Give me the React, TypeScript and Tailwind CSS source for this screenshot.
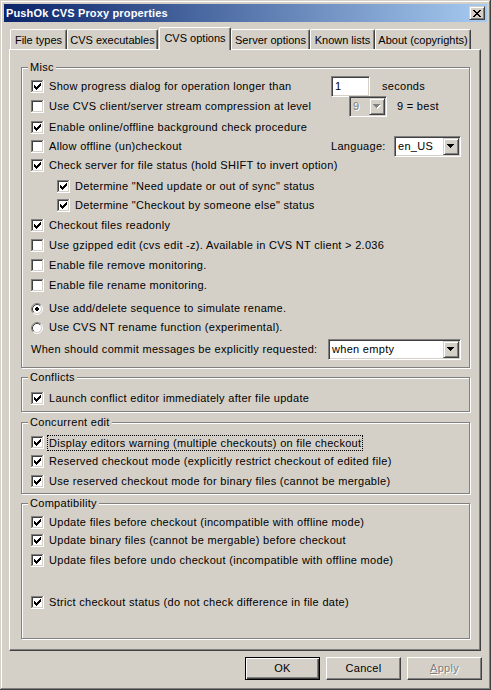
import React from "react";

// 1px bitmaps for the classic widget glyphs
const CHECK = ["......x", ".....xx", "x...xxx", "xx.xxx.", "xxxxx..", ".xxx...", "..x...."];
const CROSS = ["xx....xx", ".xx..xx.", "..xxxx..", "...xx...", "..xxxx..", ".xx..xx.", "xx....xx"];
const ARROW = ["xxxxxxx", ".xxxxx.", "..xxx..", "...x..."];
const DOT = [".xx.", "xxxx", "xxxx", ".xx."];

const sunken =
  "border border-t-[#808080] border-l-[#808080] border-b-white border-r-white shadow-[inset_1px_1px_0_#404040,inset_-1px_-1px_0_#d4d0c8]";
const raisedSmall =
  "border border-t-[#d4d0c8] border-l-[#d4d0c8] border-b-[#404040] border-r-[#404040] shadow-[inset_1px_1px_0_#fff,inset_-1px_-1px_0_#808080] bg-[#d4d0c8]";
const disabledText = "text-[#808080] [text-shadow:1px_1px_0_#fff]";

interface PixProps {
  rows: string[];
  color: string;
  dx?: number;
  dy?: number;
}

const Pix: React.FC<PixProps> = ({ rows, color, dx = 0, dy = 0 }) => (
  <>
    {rows.flatMap((r, y) =>
      r.split("").map((c, x) =>
        c === "x" ? (
          <rect key={`${x}-${y}`} x={x + dx} y={y + dy} width={1} height={1} fill={color} />
        ) : null
      )
    )}
  </>
);

const CheckBox: React.FC<{ checked?: boolean }> = ({ checked = true }) => (
  <svg width="13" height="13" className="shrink-0" shapeRendering="crispEdges">
    <rect width="13" height="13" fill="#fff" />
    <rect width="12" height="12" fill="#808080" />
    <rect x="1" y="1" width="11" height="11" fill="#d4d0c8" />
    <rect x="1" y="1" width="10" height="10" fill="#404040" />
    <rect x="2" y="2" width="9" height="9" fill="#fff" />
    {checked && <Pix rows={CHECK} color="#000" dx={3} dy={3} />}
  </svg>
);

const Radio: React.FC<{ on?: boolean }> = ({ on }) => (
  <svg width="12" height="12" viewBox="0 0 12 12" className="shrink-0">
    <circle cx="6" cy="6" r="4.5" fill="#fff" />
    <path d="M2.11 9.89 A5.5 5.5 0 0 1 9.89 2.11" fill="none" stroke="#808080" />
    <path d="M9.89 2.11 A5.5 5.5 0 0 1 2.11 9.89" fill="none" stroke="#fff" />
    <path d="M2.82 9.18 A4.5 4.5 0 0 1 9.18 2.82" fill="none" stroke="#404040" />
    <path d="M9.18 2.82 A4.5 4.5 0 0 1 2.82 9.18" fill="none" stroke="#d4d0c8" />
    {on && (
      <g shapeRendering="crispEdges">
        <Pix rows={DOT} color="#000" dx={4} dy={4} />
      </g>
    )}
  </svg>
);

const Combo: React.FC<{ value: string; width: string; disabled?: boolean }> = ({ value, width, disabled }) => (
  <div className={`flex h-[21px] shrink-0 p-[1px] ${width} ${sunken} ${disabled ? "bg-[#d4d0c8]" : "bg-white"}`}>
    <span className={`flex-1 pl-[2px] leading-[17px] ${disabled ? disabledText : ""}`}>{value}</span>
    <div className={`flex h-[17px] w-[16px] items-center justify-center ${raisedSmall}`}>
      <svg width="8" height="5" shapeRendering="crispEdges">
        {disabled ? (
          <>
            <Pix rows={ARROW} color="#fff" dx={1} dy={1} />
            <Pix rows={ARROW} color="#808080" />
          </>
        ) : (
          <Pix rows={ARROW} color="#000" />
        )}
      </svg>
    </div>
  </div>
);

const Check: React.FC<{ label: string; checked?: boolean; mt?: string; indent?: boolean; focus?: boolean }> = ({
  label,
  checked = true,
  mt = "",
  indent,
  focus,
}) => (
  <div className={`flex h-[13px] items-center ${mt} ${indent ? "pl-[26px]" : ""}`}>
    <CheckBox checked={checked} />
    {focus ? (
      <span className="ml-[4px] whitespace-nowrap px-[1px] leading-[14px] outline-1 outline-dotted outline-black">
        {label}
      </span>
    ) : (
      <span className="ml-[5px] whitespace-nowrap">{label}</span>
    )}
  </div>
);

const Group: React.FC<{ title: string; className: string; children: React.ReactNode }> = ({
  title,
  className,
  children,
}) => (
  <div
    className={`relative border border-[#808080] pl-[9px] shadow-[inset_1px_1px_0_#fff,1px_1px_0_#fff] ${className}`}
  >
    <span className="absolute left-[6px] top-[-7px] bg-[#d4d0c8] px-[2px] leading-[13px]">{title}</span>
    {children}
  </div>
);

const tabs = [
  { label: "File types", w: "w-[57px]" },
  { label: "CVS executables", w: "w-[91px] mr-[1px]" },
  { label: "CVS options", w: "w-[72px]", active: true },
  { label: "Server options", w: "w-[79px]" },
  { label: "Known lists", w: "w-[65px]" },
  { label: "About (copyrights)", w: "w-[96px]" },
];

const Button: React.FC<{ label: React.ReactNode; primary?: boolean; disabled?: boolean }> = ({
  label,
  primary,
  disabled,
}) => (
  <div
    className={`flex h-[23px] w-[75px] items-center justify-center bg-[#d4d0c8] ${
      primary
        ? "border border-black shadow-[inset_1px_1px_0_#fff,inset_-1px_-1px_0_#404040,inset_-2px_-2px_0_#808080]"
        : "border border-t-white border-l-white border-b-[#404040] border-r-[#404040] shadow-[inset_-1px_-1px_0_#808080]"
    } ${disabled ? disabledText : ""}`}
  >
    {label}
  </div>
);

export default function App() {
  return (
    <div className="h-[690px] w-[491px] bg-[#d4d0c8] p-[4px] text-[11px] leading-[13px] tracking-[0.3px] text-black [font-family:'Liberation_Sans',Arial,sans-serif] shadow-[inset_-1px_-1px_0_#404040,inset_1px_1px_0_#d4d0c8,inset_-2px_-2px_0_#808080,inset_2px_2px_0_#fff]">
      {/* title bar */}
      <div className="flex h-[18px] items-center bg-[linear-gradient(to_right,#0a246a,#a6caf0)] pl-[2px] pr-[2px]">
        <span className="flex-1 font-bold tracking-[0.15px] text-white">PushOk CVS Proxy properties</span>
        <div className={`flex h-[14px] w-[16px] items-center justify-center ${raisedSmall}`}>
          <svg width="8" height="7" shapeRendering="crispEdges">
            <Pix rows={CROSS} color="#000" />
          </svg>
        </div>
      </div>

      <div className="px-[5px] pt-[5px]">
        {/* tab strip */}
        <div className="flex h-[22px] items-end pl-[1px] tracking-normal">
          {tabs.map((t) =>
            t.active ? (
              <div
                key={t.label}
                className={`relative z-10 -mb-[1px] flex h-[23px] items-start justify-center whitespace-nowrap rounded-t-[2px] border-l border-t border-r border-l-white border-t-white border-r-[#404040] bg-[#d4d0c8] pt-[4px] shadow-[inset_-1px_0_0_#808080] ${t.w}`}
              >
                {t.label}
              </div>
            ) : (
              <div
                key={t.label}
                className={`flex h-[20px] items-start justify-center whitespace-nowrap rounded-t-[2px] border-l border-t border-r border-l-white border-t-white border-r-[#404040] pt-[4px] shadow-[inset_-1px_0_0_#808080] ${t.w}`}
              >
                {t.label}
              </div>
            )
          )}
        </div>

        {/* tab page */}
        <div className="h-[602px] w-[472px] border border-t-white border-l-white border-b-[#404040] border-r-[#404040] pl-[11px] pr-[10px] pt-[17px] shadow-[inset_-1px_-1px_0_#808080]">
          <Group title="Misc" className="h-[301px] pt-[12px]">
            <div className="flex h-[13px] items-center">
              <div className="flex w-[300px] items-center">
                <CheckBox />
                <span className="ml-[5px] whitespace-nowrap">Show progress dialog for operation longer than</span>
              </div>
              <div className={`h-[21px] w-[39px] bg-white p-[1px] ${sunken}`}>
                <span className="pl-[2px] leading-[17px]">1</span>
              </div>
              <span className="ml-[12px]">seconds</span>
            </div>
            <div className="mt-[7px] flex h-[13px] items-center">
              <div className="flex w-[318px] items-center">
                <CheckBox checked={false} />
                <span className="ml-[5px] whitespace-nowrap">Use CVS client/server stream compression at level</span>
              </div>
              <Combo value="9" width="w-[38px]" disabled />
              <span className="ml-[10px]">9 = best</span>
            </div>
            <Check mt="mt-[8px]" label="Enable online/offline background check procedure" />
            <div className="mt-[6px] flex h-[13px] items-center">
              <div className="flex w-[300px] items-center">
                <CheckBox checked={false} />
                <span className="ml-[5px]">Allow offline (un)checkout</span>
              </div>
              <span className="w-[63px]">Language:</span>
              <Combo value="en_US" width="w-[67px]" />
            </div>
            <Check mt="mt-[6px]" label="Check server for file status (hold SHIFT to invert option)" />
            <Check mt="mt-[8px]" indent label={'Determine "Need update or out of sync" status'} />
            <Check mt="mt-[6px]" indent label={'Determine "Checkout by someone else" status'} />
            <Check mt="mt-[7px]" label="Checkout files readonly" />
            <Check
              mt="mt-[7px]"
              checked={false}
              label="Use gzipped edit (cvs edit -z). Available in CVS NT client > 2.036"
            />
            <Check mt="mt-[7px]" checked={false} label="Enable file remove monitoring." />
            <Check mt="mt-[7px]" checked={false} label="Enable file rename monitoring." />
            <div className="mt-[10px] flex h-[13px] items-center">
              <Radio on />
              <span className="ml-[6px]">Use add/delete sequence to simulate rename.</span>
            </div>
            <div className="mt-[6px] flex h-[13px] items-center">
              <Radio />
              <span className="ml-[6px]">Use CVS NT rename function (experimental).</span>
            </div>
            <div className="mt-[5px] flex h-[21px] items-center">
              <span className="w-[297px] whitespace-nowrap">When should commit messages be explicitly requested:</span>
              <Combo value="when empty" width="w-[133px]" />
            </div>
          </Group>

          <Group title="Conflicts" className="mt-[9px] h-[35px] pt-[14px]">
            <Check label="Launch conflict editor immediately after file update" />
          </Group>

          <Group title="Concurrent edit" className="mt-[10px] h-[72px] pt-[13px]">
            <Check focus label="Display editors warning (multiple checkouts) on file checkout" />
            <Check mt="mt-[6px]" label="Reserved checkout mode (explicitly restrict checkout of edited file)" />
            <Check mt="mt-[7px]" label="Use reserved checkout mode for binary files (cannot be mergable)" />
          </Group>

          <Group title="Compatibility" className="mt-[9px] h-[136px] pt-[12px]">
            <Check label="Update files before checkout (incompatible with offline mode)" />
            <Check mt="mt-[5px]" label="Update binary files (cannot be mergable) before checkout" />
            <Check mt="mt-[7px]" label="Update files before undo checkout (incompatible with offline mode)" />
            <Check mt="mt-[29px]" label="Strict checkout status (do not check difference in file date)" />
          </Group>
        </div>

        {/* dialog buttons */}
        <div className="mt-[6px] flex justify-end gap-[6px]">
          <Button primary label="OK" />
          <Button label="Cancel" />
          <Button
            disabled
            label={
              <span>
                <span className="underline">A</span>pply
              </span>
            }
          />
        </div>
      </div>
    </div>
  );
}
